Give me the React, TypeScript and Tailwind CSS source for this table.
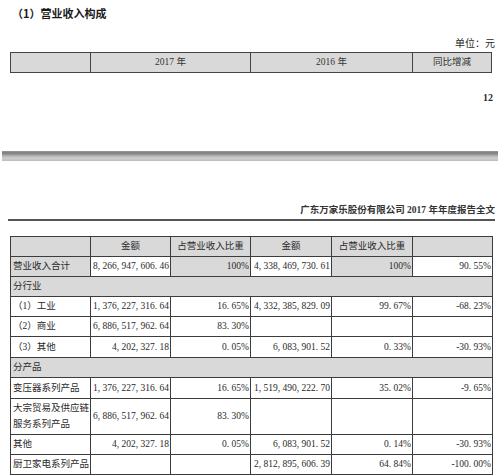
import React from 'react';

type Cell = { text?: string; align?: 'left' | 'right' | 'center'; gray?: boolean; span?: number };
type Row = { h: number; cells: Cell[] };

const serif = "font-['Liberation_Serif','Noto_Sans_CJK_SC',serif]";

const rows: Row[] = [
    {
        h: 20,
        cells: [
            { gray: true },
            { text: '金额', align: 'center', gray: true },
            { text: '占营业收入比重', align: 'center', gray: true },
            { text: '金额', align: 'center', gray: true },
            { text: '占营业收入比重', align: 'center', gray: true },
            { gray: true },
        ],
    },
    {
        h: 20,
        cells: [
            { text: '营业收入合计', gray: true },
            { text: '8, 266, 947, 606. 46', align: 'right' },
            { text: '100%', align: 'right', gray: true },
            { text: '4, 338, 469, 730. 61', align: 'right' },
            { text: '100%', align: 'right', gray: true },
            { text: '90. 55%', align: 'right' },
        ],
    },
    { h: 20, cells: [{ text: '分行业', gray: true, span: 6 }] },
    {
        h: 20,
        cells: [
            { text: '（1）工业' },
            { text: '1, 376, 227, 316. 64', align: 'right' },
            { text: '16. 65%', align: 'right' },
            { text: '4, 332, 385, 829. 09', align: 'right' },
            { text: '99. 67%', align: 'right' },
            { text: '-68. 23%', align: 'right' },
        ],
    },
    {
        h: 20,
        cells: [
            { text: '（2）商业' },
            { text: '6, 886, 517, 962. 64', align: 'right' },
            { text: '83. 30%', align: 'right' },
            {},
            {},
            {},
        ],
    },
    {
        h: 21,
        cells: [
            { text: '（3）其他' },
            { text: '4, 202, 327. 18', align: 'right' },
            { text: '0. 05%', align: 'right' },
            { text: '6, 083, 901. 52', align: 'right' },
            { text: '0. 33%', align: 'right' },
            { text: '-30. 93%', align: 'right' },
        ],
    },
    { h: 20, cells: [{ text: '分产品', gray: true, span: 6 }] },
    {
        h: 21,
        cells: [
            { text: '变压器系列产品' },
            { text: '1, 376, 227, 316. 64', align: 'right' },
            { text: '16. 65%', align: 'right' },
            { text: '1, 519, 490, 222. 70', align: 'right' },
            { text: '35. 02%', align: 'right' },
            { text: '-9. 65%', align: 'right' },
        ],
    },
    {
        h: 36,
        cells: [
            { text: '大宗贸易及供应链服务系列产品' },
            { text: '6, 886, 517, 962. 64', align: 'right' },
            { text: '83. 30%', align: 'right' },
            {},
            {},
            {},
        ],
    },
    {
        h: 20,
        cells: [
            { text: '其他' },
            { text: '4, 202, 327. 18', align: 'right' },
            { text: '0. 05%', align: 'right' },
            { text: '6, 083, 901. 52', align: 'right' },
            { text: '0. 14%', align: 'right' },
            { text: '-30. 93%', align: 'right' },
        ],
    },
    {
        h: 20,
        cells: [
            { text: '厨卫家电系列产品' },
            {},
            {},
            { text: '2, 812, 895, 606. 39', align: 'right' },
            { text: '64. 84%', align: 'right' },
            { text: '-100. 00%', align: 'right' },
        ],
    },
];

const widths = [80, 80, 80, 81, 81, 80];

export default function App() {
    return (
        <div className={`w-[500px] h-[476px] overflow-hidden bg-white text-[#2a2a2a] ${serif}`}>
            <div className="h-[26px] flex items-center pl-[12px] pt-[1px] text-[11px] font-bold text-[#1a1a1a] font-['Noto_Sans_CJK_SC',sans-serif]">
                （1）营业收入构成
            </div>
            <div className="h-[26px] flex items-center justify-end pt-[8px] pr-[5px] text-[10px]">
                单位：元
            </div>

            {/* first header table */}
            <div className="ml-[10px] w-[482px] h-[21px] flex border border-[#444] bg-[#d9d9d9] text-[9.5px] text-[#333]">
                <div className="w-[80px] border-r border-[#444]" />
                <div className="w-[160px] border-r border-[#444] flex items-center justify-center">2017 年</div>
                <div className="w-[162px] border-r border-[#444] flex items-center justify-center">2016 年</div>
                <div className="flex-1 flex items-center justify-center">同比增减</div>
            </div>

            <div className="h-[78px] pt-[17px]">
                <div className="h-[14px] flex items-center justify-end pr-[7px] text-[10px] font-bold">12</div>
            </div>

            <div className="mx-[2px] h-[10px] bg-[linear-gradient(to_bottom,#9a9a9a_0%,#7c7c7c_20%,#b4b4b4_50%,#cfcfcf_70%,#bdbdbd_100%)]" />

            <div className="h-[58px] flex items-end justify-end pr-[5px] pb-[2px] text-[9.5px] font-bold text-[#333]">
                广东万家乐股份有限公司 2017 年年度报告全文
            </div>
            <div className="ml-[8px] w-[487px] h-[1.5px] bg-[#555]" />

            <table className="mt-[15px] ml-[10px] border-collapse table-fixed text-[9.5px]">
                <colgroup>
                    {widths.map((w, i) => (
                        <col key={i} style={{ width: w }} />
                    ))}
                </colgroup>
                <tbody>
                    {rows.map((r, ri) => (
                        <tr key={ri} style={{ height: r.h }}>
                            {r.cells.map((c, ci) => (
                                <td
                                    key={ci}
                                    colSpan={c.span}
                                    className={`border border-[#3c3c3c] p-0 leading-[16px] ${c.gray ? 'bg-[#d9d9d9]' : 'bg-white'} ${
                                        c.align === 'right' ? 'text-right pr-[1px]' : c.align === 'center' ? 'text-center' : 'text-left pl-[2px]'
                                    }`}
                                >
                                    {c.text}
                                </td>
                            ))}
                        </tr>
                    ))}
                </tbody>
            </table>
        </div>
    );
}
